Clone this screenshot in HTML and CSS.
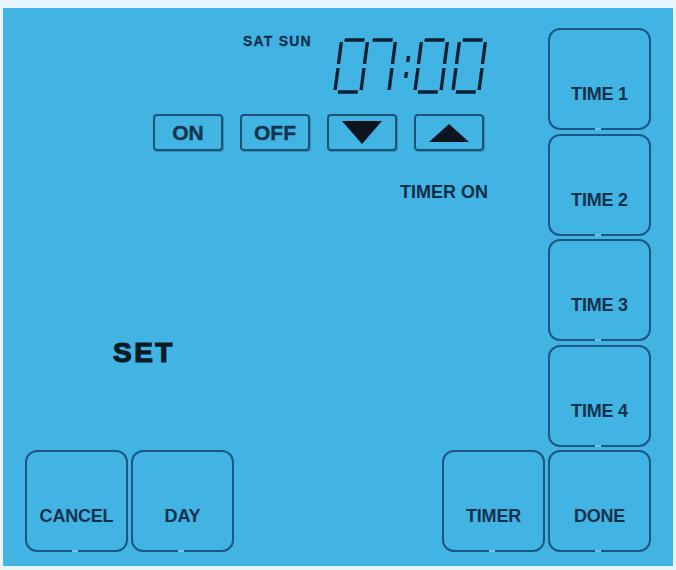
FILE: index.html
```html
<!DOCTYPE html>
<html lang="en">
<head>
<meta charset="utf-8">
<title>Timer panel</title>
<link rel="stylesheet" href="styles.css">
</head>
<body>
<div class="panel">
  <div class="main">
    <div class="header">
      <div class="days">SAT SUN</div>
      <svg class="clock" width="156" height="58" viewBox="0 0 156 58" aria-label="07:00">
        <g transform="translate(7,0) skewX(-7.4)" fill="none" stroke="#0c2234" stroke-width="3.4" stroke-linecap="butt">
          <path d="M5 3H25 M28 5V27 M28 31V53 M5 55H25 M2 31V53 M2 5V27"/>
          <path d="M33 3H53 M56 5V27 M56 31V53"/>
          <path d="M71 19V25 M71 35V41"/>
          <path d="M85 3H105 M108 5V27 M108 31V53 M85 55H105 M82 31V53 M82 5V27"/>
          <path d="M123 3H143 M146 5V27 M146 31V53 M123 55H143 M120 31V53 M120 5V27"/>
        </g>
      </svg>
    </div>
    <div class="controls">
      <div class="key">ON</div>
      <div class="key">OFF</div>
      <div class="key"><svg width="40" height="23" viewBox="0 0 40 23"><polygon points="0,0 40,0 20,23" fill="#0d1620"/></svg></div>
      <div class="key"><svg width="40" height="18" viewBox="0 0 40 18"><polygon points="0,18 40,18 20,0" fill="#0d1620"/></svg></div>
    </div>
    <div class="status">TIMER ON</div>
    <div class="mode">SET</div>
    <div class="bottom">
      <div class="btn">CANCEL</div>
      <div class="btn">DAY</div>
      <div class="spacer"></div>
      <div class="btn">TIMER</div>
    </div>
  </div>
  <div class="side">
    <div class="btn">TIME 1</div>
    <div class="btn">TIME 2</div>
    <div class="btn">TIME 3</div>
    <div class="btn">TIME 4</div>
    <div class="btn">DONE</div>
  </div>
</div>
</body>
</html>
```
FILE: styles.css
```css
html, body {
  margin: 0;
  padding: 0;
}
body {
  width: 676px;
  height: 570px;
  background: #e6f5fb;
  font-family: "Liberation Sans", Arial, sans-serif;
  color: #10304a;
  overflow: hidden;
}
.panel {
  box-sizing: border-box;
  margin: 8px 3px 0 3px;
  width: 670px;
  height: 558px;
  background: #42b4e4;
  display: flex;
  gap: 3px;
  padding: 20px 22px 14px 22px;
}
.main {
  flex: 1;
  display: flex;
  flex-direction: column;
}
.side {
  width: 103px;
  display: flex;
  flex-direction: column;
  gap: 3.5px;
}
.btn {
  position: relative;
  box-sizing: border-box;
  width: 103px;
  height: 102px;
  border: 2px solid #1b5780;
  border-radius: 12px;
  display: flex;
  justify-content: center;
  align-items: flex-start;
  padding-top: 54px;
  font-size: 18px;
  line-height: 20px;
  font-weight: bold;
  color: #12324c;
  letter-spacing: -0.2px;
}
.btn::after {
  content: "";
  position: absolute;
  left: 50%;
  bottom: -2px;
  width: 6px;
  height: 2px;
  margin-left: -5px;
  background: #6cc6ec;
}
.header {
  display: flex;
  align-items: flex-start;
  padding-left: 218px;
}
.days {
  width: 90px;
  margin-top: 6px;
  font-size: 14px;
  line-height: 14px;
  font-weight: bold;
  letter-spacing: 1.2px;
  color: #122f48;
  -webkit-text-stroke: 0.3px #122f48;
}
.clock {
  display: block;
  margin-top: 9px;
}
.controls {
  display: flex;
  gap: 17px;
  margin-top: 19px;
  padding-left: 128px;
}
.key {
  box-sizing: border-box;
  width: 70px;
  height: 37px;
  border: 2px solid #1d5277;
  border-radius: 4px;
  display: flex;
  justify-content: center;
  align-items: center;
  font-size: 21px;
  font-weight: bold;
  color: #14344e;
  -webkit-text-stroke: 0.4px #14344e;
  box-shadow: 1px 1px 0 rgba(20, 70, 110, 0.35);
}
.key svg {
  display: block;
}
.status {
  margin-top: 31px;
  align-self: flex-end;
  margin-right: 57px;
  font-size: 18px;
  line-height: 20px;
  font-weight: bold;
  color: #0f2c46;
}
.mode {
  margin-top: 136px;
  margin-left: 88px;
  font-size: 28px;
  line-height: 30px;
  font-weight: bold;
  letter-spacing: 2.5px;
  color: #0a1a28;
  -webkit-text-stroke: 1.2px #0a1a28;
}
.bottom {
  margin-top: auto;
  display: flex;
  gap: 3px;
}
.spacer {
  flex: 1;
}
```
